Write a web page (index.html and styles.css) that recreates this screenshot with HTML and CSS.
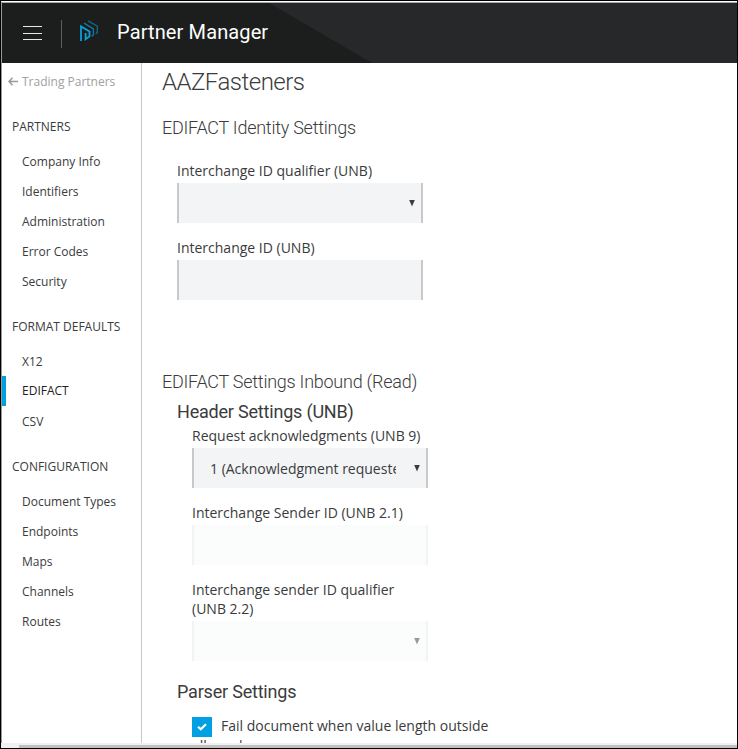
FILE: index.html
```
<!DOCTYPE html>
<html lang="en">
<head>
<meta charset="utf-8">
<title>Partner Manager</title>
<link rel="stylesheet" href="styles.css">
</head>
<body>
<div class="frame">
  <header class="topbar">
    <svg class="menu" width="19" height="15" viewBox="0 0 19 15" shape-rendering="crispEdges"><path d="M0 .5H19M0 7.5H19M0 13.5H19" stroke="#e8e8e8" stroke-width="1"/></svg>
    <span class="divider"></span>
    <svg class="logo" width="20" height="22" viewBox="0 0 20 22" fill="none" stroke="#0aa0dc" stroke-linejoin="miter">
      <path d="M2 21V6.4L10.5 11.6V16.4L6.6 19.2V13" stroke-width="1.8"/>
      <path d="M5 3.2L14.4 8.8V15L12.6 16.2" stroke-width="1.4" opacity=".7"/>
      <path d="M9 .8L18.3 6.2V12.6L16.6 13.8" stroke-width="1.4" opacity=".55"/>
    </svg>
    <span class="app-name">Partner Manager</span>
  </header>
  <div class="body">
    <nav class="sidebar">
      <a class="back"><svg width="10" height="9" viewBox="0 0 10 9" fill="none" stroke="#999" stroke-width="1.5"><path d="M10 4.5H1.2M4.6 .8L1 4.5L4.6 8.2"/></svg><span>Trading Partners</span></a>
      <h4 class="first">PARTNERS</h4>
      <a class="item">Company Info</a>
      <a class="item">Identifiers</a>
      <a class="item">Administration</a>
      <a class="item">Error Codes</a>
      <a class="item">Security</a>
      <h4>FORMAT DEFAULTS</h4>
      <a class="item">X12</a>
      <a class="item active">EDIFACT</a>
      <a class="item">CSV</a>
      <h4>CONFIGURATION</h4>
      <a class="item">Document Types</a>
      <a class="item">Endpoints</a>
      <a class="item">Maps</a>
      <a class="item">Channels</a>
      <a class="item">Routes</a>
    </nav>
    <main class="content">
      <h1>AAZFasteners</h1>
      <h2 class="identity">EDIFACT Identity Settings</h2>
      <section class="group">
        <div class="field"><label>Interchange ID qualifier (UNB)</label><div class="box"><i class="arrow"></i></div></div>
        <div class="field"><label>Interchange ID (UNB)</label><div class="box"></div></div>
      </section>
      <h2 class="inbound">EDIFACT Settings Inbound (Read)</h2>
      <h3 class="header-settings">Header Settings (UNB)</h3>
      <section class="group nested">
        <div class="field"><label>Request acknowledgments (UNB 9)</label><div class="box"><span class="value">1 (Acknowledgment requested)</span><i class="arrow"></i></div></div>
        <div class="field"><label>Interchange Sender ID (UNB 2.1)</label><div class="box disabled"></div></div>
        <div class="field"><label>Interchange sender ID qualifier (UNB 2.2)</label><div class="box disabled"><i class="arrow"></i></div></div>
      </section>
      <h3 class="parser">Parser Settings</h3>
      <div class="check"><span class="tick"><svg width="10" height="8" viewBox="0 0 10 8" fill="none" stroke="#fff" stroke-width="2.2"><path d="M1 3.7L3.8 6.3L9 1.2"/></svg></span>Fail document when value length outside allowed</div>
    </main>
  </div>
  <div class="scrollbar"><div class="thumb"></div></div>
</div>
</body>
</html>
```
FILE: styles.css
```
* { box-sizing: border-box; }
body { margin: 0; font-family: "Open Sans", sans-serif; color: #3a3b3c; background: #fff; }
h1, h2, h3, h4 { margin: 0; font-weight: 400; white-space: nowrap; }
.frame { width: 738px; height: 749px; border: 1px solid #000; padding-top: 1px; display: flex; flex-direction: column; overflow: hidden; }
.topbar { height: 61px; flex: none; border-top: 1px solid #aaa8ad; border-left: 1px solid #999; display: flex; align-items: center; background: #1c1e1d; position: relative; }
.topbar::before { content: ""; position: absolute; inset: 0; background: #272829; clip-path: polygon(267px 0, 100% 0, 100% 100%, 370px 100%); }
.topbar > * { position: relative; }
.menu { margin-left: 21px; }
.divider { width: 1px; height: 28px; margin: 1px 0 0 19px; background: #5c5e5e; }
.logo { margin: -5px 0 0 17px; }
.app-name { margin-left: 18px; margin-top: -2px; color: #fff; font: 400 20px/30px Roboto, sans-serif; letter-spacing: .12px; white-space: nowrap; }
.body { flex: 1; min-height: 0; display: flex; border-left: 1px solid #999; overflow: hidden; }
.sidebar { width: 140px; flex: none; border-right: 1px solid #c8c8c8; font-size: 12px; white-space: nowrap; }
.back { display: flex; align-items: center; gap: 4px; height: 36px; padding-left: 6px; color: #a0a0a0; }
.sidebar h4 { padding: 16px 0 4px 10px; height: 50px; font-size: 12px; line-height: 30px; }
.sidebar h4.first { height: 47px; padding-top: 13px; }
.item { display: block; height: 30px; line-height: 32px; padding-left: 20px; }
.active { border-left: 4px solid #00a0df; padding-left: 16px; line-height: 29px; color: #222; }
.content { flex: 1; min-width: 0; padding-left: 20px; font-size: 14px; }
h1, h2, h3 { font-family: Roboto, sans-serif; }
h1 { font-size: 24px; line-height: 30px; font-weight: 300; margin-top: 4px; letter-spacing: -.5px; }
h2 { font-size: 18px; line-height: 24px; font-weight: 300; letter-spacing: -.25px; }
.identity { margin-top: 19px; }
.group { margin: 21px 0 0 15px; width: 246px; }
.field { margin-bottom: 15px; }
.field label { display: block; line-height: 19px; padding-bottom: 3px; }
.box { height: 40px; background: #f3f4f6; border: solid #c8c9cb; border-width: 0 2px; display: flex; align-items: center; padding: 0 6px 0 16px; }
.arrow { margin-left: auto; width: 6px; height: 7px; background: #3a3b3c; clip-path: polygon(0 0, 100% 0, 50% 100%); }
.disabled { background: #fbfcfc; border-color: #f2f3f4; }
.disabled .arrow { background: #999; }
.value { width: 186px; overflow: hidden; white-space: nowrap; }
.inbound { margin-top: 70px; }
h3 { font-size: 18px; line-height: 24px; margin-left: 15px; letter-spacing: -.2px; }
.header-settings { margin-top: 6px; }
.nested { margin: 2px 0 0 30px; width: 236px; }
.parser { margin-top: 19px; }
.check { margin: 13px 0 0 30px; width: 310px; line-height: 18px; }
.tick { display: inline-flex; width: 20px; height: 20px; margin-right: 9px; background: #00a0e3; align-items: center; justify-content: center; vertical-align: top; }
.scrollbar { height: 5px; flex: none; padding: 2px 0 0 18px; background: #f1f1f1; }
.thumb { height: 3px; background: #c1c1c1; }
```
